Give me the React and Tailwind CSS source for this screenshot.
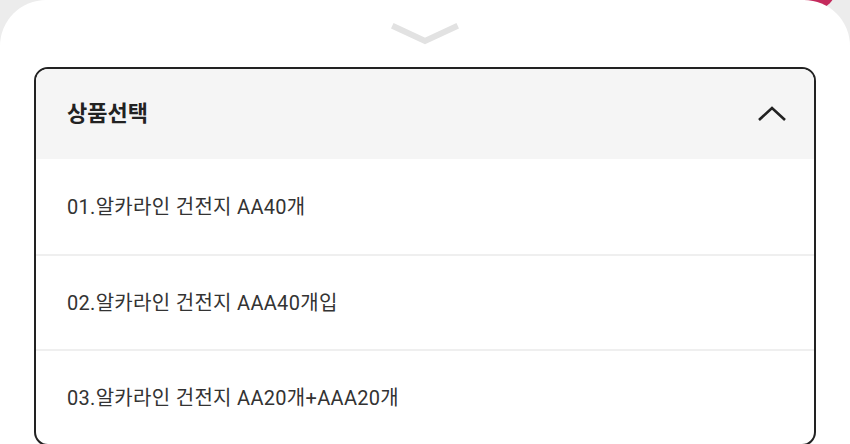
export default function App() {
  const items = [
    '01.알카라인 건전지 AA40개',
    '02.알카라인 건전지 AAA40개입',
    '03.알카라인 건전지 AA20개+AAA20개',
  ];

  return (
    <div
      className="relative w-[850px] h-[444px] overflow-hidden bg-[#ececec]"
      style={{ fontFamily: 'Roboto, "Noto Sans CJK KR", "Noto Sans", sans-serif' }}
    >
      {/* what peeks out behind the sheet */}
      <div className="absolute -top-[34px] right-[14px] w-[60px] h-[44px] rounded-full bg-[#c42a5c]" />

      <div className="relative h-full bg-white rounded-t-[46px] pt-[22px]">
        <div className="flex justify-center">
          <svg width="68" height="24" viewBox="0 0 68 24" fill="none">
            <path d="M4 5 L34 19 L64 5" stroke="#e2e2e2" strokeWidth="6" strokeLinecap="square" strokeLinejoin="miter" />
          </svg>
        </div>

        <div className="mx-[34px] mt-[21px] border-2 border-[#222] rounded-[14px] overflow-hidden">
          <div className="flex items-center justify-between h-[90px] bg-[#f5f5f5] pl-[31px] pr-[26px]">
            <span className="text-[22px] font-bold text-[#222] leading-none">상품선택</span>
            <svg width="32" height="18" viewBox="0 0 32 18" fill="none">
              <path d="M3 15 L16 3 L29 15" stroke="#222" strokeWidth="2.6" />
            </svg>
          </div>
          {items.map((t, i) => (
            <div
              key={t}
              className={`flex items-center h-[95px] pl-[31px] text-[20px] tracking-[0.3px] text-[#333] ${i > 0 ? 'border-t-2 border-[#efefef]' : ''}`}
            >
              {t}
            </div>
          ))}
        </div>
      </div>
    </div>
  );
}
